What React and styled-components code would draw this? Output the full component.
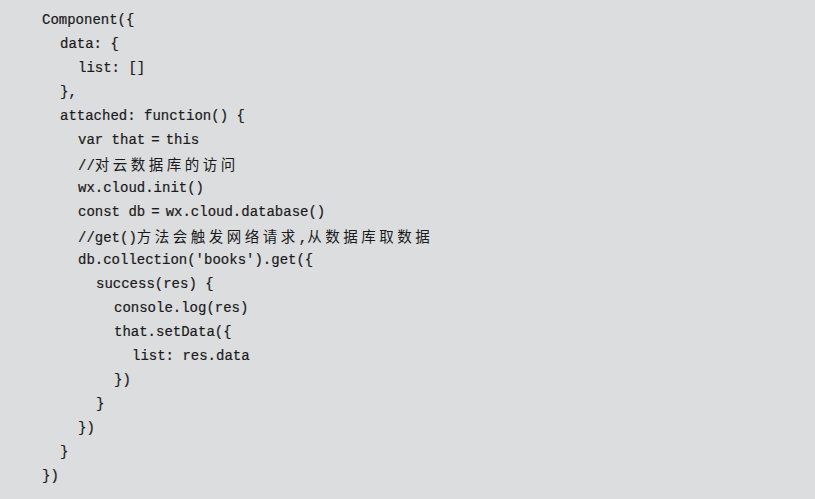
import styled, {createGlobalStyle} from "styled-components";

const GlobalStyle = createGlobalStyle`
  html, body {
    margin: 0;
    padding: 0;
    background-color: #DCDDDF;
  }
`

const CodeBlock = styled.pre`
  margin: 0;
  padding: 8px 0 0 42px;
  min-height: 499px;
  box-sizing: border-box;
  background-color: #DCDDDF;
  color: #1A1A1A;
  font-family: "Liberation Mono", "Noto Sans CJK SC", monospace;
  font-size: 14px;
  line-height: 24px;
  -webkit-text-stroke: 0.2px #1A1A1A;
`

const Line = styled.div`
  padding-left: ${props => props.$indent * 18}px;
  height: 24px;
  white-space: pre;
`

const Cjk = styled.span`
  font-family: "Noto Sans CJK SC", sans-serif;
  font-size: 14.5px;
  letter-spacing: 3.5px;
  -webkit-text-stroke: 0;
`

const Eq = styled.span`
  margin: 0 6px;
`

const lines = [
  [0, "Component({"],
  [1, "data: {"],
  [2, "list: []"],
  [1, "},"],
  [1, "attached: function() {"],
  [2, <>var that<Eq>=</Eq>this</>],
  [2, <>//<Cjk>对云数据库的访问</Cjk></>],
  [2, "wx.cloud.init()"],
  [2, <>const db<Eq>=</Eq>wx.cloud.database()</>],
  [2, <>//get()<Cjk>方法会触发网络请求</Cjk>,<Cjk>从数据库取数据</Cjk></>],
  [2, "db.collection('books').get({"],
  [3, "success(res) {"],
  [4, "console.log(res)"],
  [4, "that.setData({"],
  [5, "list: res.data"],
  [4, "})"],
  [3, "}"],
  [2, "})"],
  [1, "}"],
  [0, "})"],
];

function App() {
  return (
    <>
      <GlobalStyle />
      <CodeBlock>
        {lines.map(([indent, text], i) => (
          <Line key={i} $indent={indent}>{text}</Line>
        ))}
      </CodeBlock>
    </>
  )
}

export default App;
